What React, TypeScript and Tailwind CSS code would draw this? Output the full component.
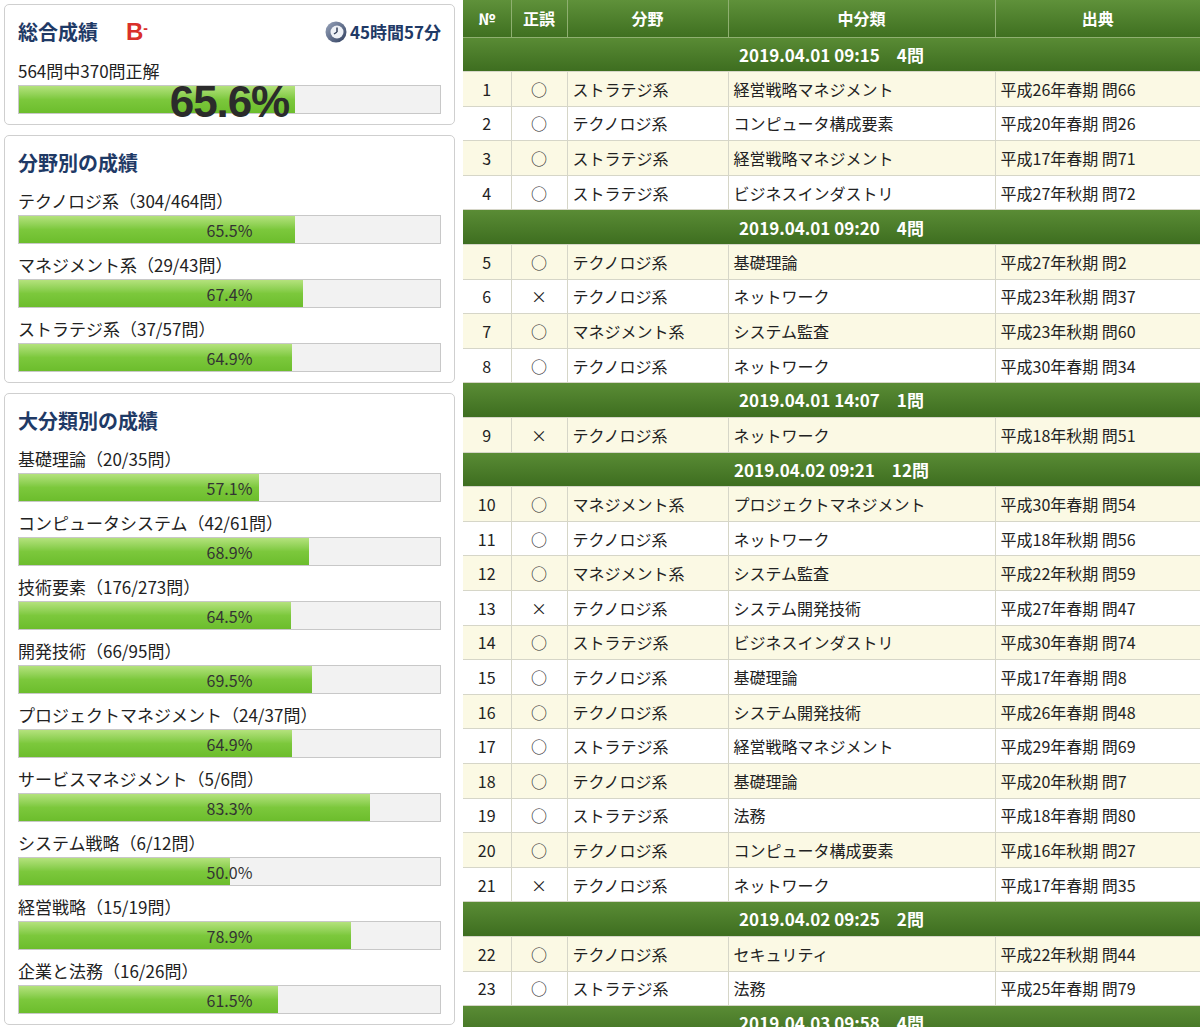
const font = { fontFamily: '"Noto Sans CJK JP", "Noto Sans", sans-serif' }

const fields = [
  ["テクノロジ系（304/464問）", 65.5],
  ["マネジメント系（29/43問）", 67.4],
  ["ストラテジ系（37/57問）", 64.9],
] as const

const cats = [
  ["基礎理論（20/35問）", 57.1],
  ["コンピュータシステム（42/61問）", 68.9],
  ["技術要素（176/273問）", 64.5],
  ["開発技術（66/95問）", 69.5],
  ["プロジェクトマネジメント（24/37問）", 64.9],
  ["サービスマネジメント（5/6問）", 83.3],
  ["システム戦略（6/12問）", 50.0],
  ["経営戦略（15/19問）", 78.9],
  ["企業と法務（16/26問）", 61.5],
] as const

type Row = [number, string, string, string, string]
const groups: { title: string; rows: Row[] }[] = [
  { title: "2019.04.01 09:15　4問", rows: [
    [1, "○", "ストラテジ系", "経営戦略マネジメント", "平成26年春期 問66"],
    [2, "○", "テクノロジ系", "コンピュータ構成要素", "平成20年春期 問26"],
    [3, "○", "ストラテジ系", "経営戦略マネジメント", "平成17年春期 問71"],
    [4, "○", "ストラテジ系", "ビジネスインダストリ", "平成27年秋期 問72"],
  ]},
  { title: "2019.04.01 09:20　4問", rows: [
    [5, "○", "テクノロジ系", "基礎理論", "平成27年秋期 問2"],
    [6, "×", "テクノロジ系", "ネットワーク", "平成23年秋期 問37"],
    [7, "○", "マネジメント系", "システム監査", "平成23年秋期 問60"],
    [8, "○", "テクノロジ系", "ネットワーク", "平成30年春期 問34"],
  ]},
  { title: "2019.04.01 14:07　1問", rows: [
    [9, "×", "テクノロジ系", "ネットワーク", "平成18年秋期 問51"],
  ]},
  { title: "2019.04.02 09:21　12問", rows: [
    [10, "○", "マネジメント系", "プロジェクトマネジメント", "平成30年春期 問54"],
    [11, "○", "テクノロジ系", "ネットワーク", "平成18年秋期 問56"],
    [12, "○", "マネジメント系", "システム監査", "平成22年秋期 問59"],
    [13, "×", "テクノロジ系", "システム開発技術", "平成27年春期 問47"],
    [14, "○", "ストラテジ系", "ビジネスインダストリ", "平成30年春期 問74"],
    [15, "○", "テクノロジ系", "基礎理論", "平成17年春期 問8"],
    [16, "○", "テクノロジ系", "システム開発技術", "平成26年春期 問48"],
    [17, "○", "ストラテジ系", "経営戦略マネジメント", "平成29年春期 問69"],
    [18, "○", "テクノロジ系", "基礎理論", "平成20年秋期 問7"],
    [19, "○", "ストラテジ系", "法務", "平成18年春期 問80"],
    [20, "○", "テクノロジ系", "コンピュータ構成要素", "平成16年秋期 問27"],
    [21, "×", "テクノロジ系", "ネットワーク", "平成17年春期 問35"],
  ]},
  { title: "2019.04.02 09:25　2問", rows: [
    [22, "○", "テクノロジ系", "セキュリティ", "平成22年秋期 問44"],
    [23, "○", "ストラテジ系", "法務", "平成25年春期 問79"],
  ]},
  { title: "2019.04.03 09:58　4問", rows: [] },
]

function Bar({ pct, big }: { pct: number; big?: boolean }) {
  return (
    <div className="relative h-[29px] border border-[#c8c8c8] bg-[#f2f2f2]">
      <div
        className="h-full bg-gradient-to-b from-[#b4e27c] via-[#7cc83c] to-[#6cbd2c]"
        style={{ width: `${pct}%` }}
      />
      {big ? (
        <div className="absolute inset-x-0 top-[-6px] text-center text-[44px] font-bold leading-none text-[#2b2b2b] tracking-tight" style={{ fontFamily: '"Liberation Sans", sans-serif' }}>
          {pct.toFixed(1)}%
        </div>
      ) : (
        <div className="absolute inset-0 flex items-center justify-center text-[16px] text-[#333]">{pct.toFixed(1)}%</div>
      )}
    </div>
  )
}

function Stat({ label, pct }: { label: string; pct: number }) {
  return (
    <div className="mt-[7px]">
      <div className="text-[17px] leading-[28px] text-[#222]">{label}</div>
      <Bar pct={pct} />
    </div>
  )
}

function Panel({ title, children }: { title: string; children: React.ReactNode }) {
  return (
    <div className="rounded-[5px] border border-[#cfcfcf] bg-white px-[13px] pt-[10px] pb-[10px]">
      <div className="text-[20px] font-bold text-[#1f3a66] leading-[34px]">{title}</div>
      {children}
    </div>
  )
}

function Clock() {
  return (
    <svg width="22" height="22" viewBox="0 0 22 22">
      <defs>
        <linearGradient id="cg" x1="0" y1="0" x2="1" y2="1">
          <stop offset="0" stopColor="#9aa6bd" />
          <stop offset="1" stopColor="#2f3e5e" />
        </linearGradient>
      </defs>
      <circle cx="11" cy="11" r="10.5" fill="url(#cg)" />
      <circle cx="12" cy="11" r="6.5" fill="#eef1f6" />
      <path d="M12 11 L12 6.5 M12 11 L9 13" stroke="#34405a" strokeWidth="1.5" />
    </svg>
  )
}

export default function App() {
  return (
    <div className="flex w-[1200px] h-[1027px] overflow-hidden bg-white" style={font}>
      <div className="w-[463px] shrink-0 flex flex-col gap-[10px] pl-[4px] pr-[8px] pt-[4px]">
        <div className="rounded-[5px] border border-[#cfcfcf] bg-white px-[13px] pt-[12px] pb-[10px]">
          <div className="flex items-center">
            <span className="text-[20px] font-bold text-[#1f3a66]">総合成績</span>
            <span className="ml-[28px] text-[24px] font-bold text-[#d9302a] leading-none" style={{ fontFamily: '"Liberation Sans", sans-serif' }}>B<sup className="text-[14px]">-</sup></span>
            <span className="ml-auto flex items-center gap-[3px] text-[17px] font-bold text-[#1f3a66]"><Clock />45時間57分</span>
          </div>
          <div className="text-[17px] leading-[28px] text-[#222] mt-[10px]">564問中370問正解</div>
          <Bar pct={65.6} big />
        </div>
        <Panel title="分野別の成績">
          {fields.map(([l, p]) => <Stat key={l} label={l} pct={p} />)}
        </Panel>
        <Panel title="大分類別の成績">
          {cats.map(([l, p]) => <Stat key={l} label={l} pct={p} />)}
        </Panel>
      </div>
      <div className="flex-1">
        <table className="w-full border-collapse text-[16px] text-[#222]">
          <colgroup>
            <col className="w-[48px]" /><col className="w-[56px]" /><col className="w-[161px]" /><col className="w-[267px]" /><col />
          </colgroup>
          <thead>
            <tr className="h-[37px] bg-gradient-to-b from-[#5f913a] to-[#3f7020] text-white font-bold">
              {["№", "正誤", "分野", "中分類", "出典"].map(h => (
                <th key={h} className="border-r border-[#8fb070] last:border-r-0 font-bold text-[16px]">{h}</th>
              ))}
            </tr>
          </thead>
          <tbody>
            {groups.map(g => (
              <>
                <tr key={g.title} className="h-[34.6px] bg-gradient-to-b from-[#5a8c35] to-[#3d6d1f] text-white">
                  <td colSpan={5} className="text-center font-bold border-t border-[#8fb070] text-[17px] py-0">{g.title}</td>
                </tr>
                {g.rows.map((r, i) => (
                  <tr key={r[0]} className={`h-[34.6px] ${i % 2 === 0 ? "bg-[#fbf9e4]" : "bg-white"}`}>
                    <td className="text-center border border-[#d6d6c8] border-l-0 py-0">{r[0]}</td>
                    <td className="text-center border border-[#d6d6c8] py-0">{r[1]}</td>
                    <td className="px-[5px] border border-[#d6d6c8] py-0">{r[2]}</td>
                    <td className="px-[5px] border border-[#d6d6c8] py-0">{r[3]}</td>
                    <td className="px-[5px] border border-[#d6d6c8] border-r-0 py-0">{r[4]}</td>
                  </tr>
                ))}
              </>
            ))}
          </tbody>
        </table>
      </div>
    </div>
  )
}
